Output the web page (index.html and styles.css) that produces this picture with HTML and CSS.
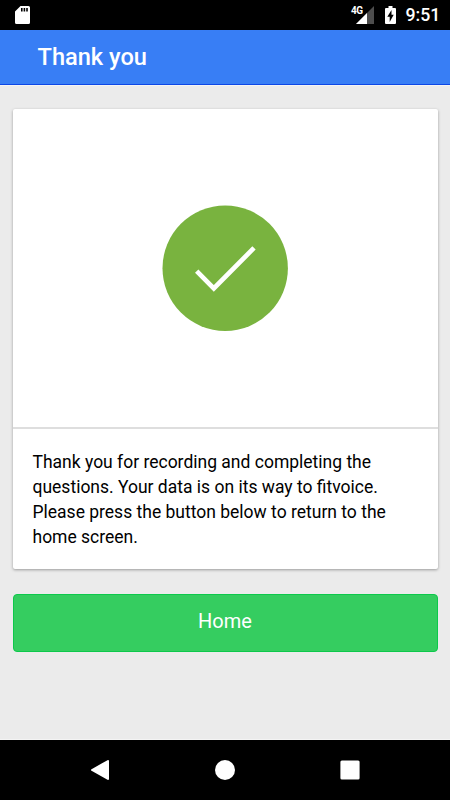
FILE: index.html
```html
<!DOCTYPE html>
<html lang="en">
<head>
<meta charset="utf-8">
<title>Thank you</title>
<link rel="stylesheet" href="styles.css">
</head>
<body>
<div class="screen">
  <div class="status">
    <svg class="sd" width="15" height="18" viewBox="0 0 15 18"><path fill="#fff" fill-rule="evenodd" d="M5.500 0H13.500Q15 0 15 1.500V16.500Q15 18 13.500 18H1.500Q0 18 0 16.500V5.500ZM6 2V5.500H7.600V2ZM8.600 2V5.500H10.200V2ZM11.200 2V5.500H12.800V2Z"/></svg>
    <div class="status-right">
      <span class="net">4G</span>
      <svg class="signal" width="18" height="18" viewBox="0 0 18 18"><path fill="#4d4d4d" d="M18 0V18H0Z"/><path fill="#fff" d="M11 7V18H0Z"/></svg>
      <svg class="battery" width="11" height="18" viewBox="0 0 11 18"><path fill="#fff" fill-rule="evenodd" d="M3.500 0H7.500V2H10Q11 2 11 3V17Q11 18 10 18H1Q0 18 0 17V3Q0 2 1 2H3.500ZM6.500 4L2.300 10.800H4.700V16L8.700 8.800H6.500Z"/></svg>
      <span class="clock">9:51</span>
    </div>
  </div>
  <header class="toolbar"><h1>Thank you</h1></header>
  <main class="content">
    <section class="card">
      <div class="card-image">
        <svg width="126" height="126" viewBox="0 0 126 126"><circle cx="63.200" cy="63.200" r="62.700" fill="#79b33f"/><path d="M34.700 66.200L51.800 83.400L92 42.900" fill="none" stroke="#fff" stroke-width="4.700"/></svg>
      </div>
      <p class="message">Thank you for recording and completing the<br>questions. Your data is on its way to fitvoice.<br>Please press the button below to return to the<br>home screen.</p>
    </section>
    <button class="home">Home</button>
  </main>
  <nav class="navbar">
    <svg width="20" height="20" viewBox="0 0 20 20"><path fill="#fff" stroke="#fff" stroke-width="2" stroke-linejoin="round" d="M2 10L18 1V19Z"/></svg>
    <svg width="20" height="20" viewBox="0 0 20 20"><circle cx="10" cy="10" r="10" fill="#fff"/></svg>
    <svg width="20" height="20" viewBox="0 0 20 20"><rect x=".4" y=".4" width="19.200" height="19.200" rx="1.500" fill="#fff"/></svg>
  </nav>
</div>
</body>
</html>
```
FILE: styles.css
```css
* { box-sizing: border-box; }
body { margin: 0; font-family: Roboto, sans-serif; }
.screen { width: 450px; height: 800px; display: flex; flex-direction: column; background: #ebebeb; overflow: hidden; }
.status { height: 30px; background: #000; color: #fff; display: flex; justify-content: space-between; padding: 0 10px 0 15px; align-items: center; }
.status-right { display: flex; align-items: center; }
.net { font-size: 10px; font-weight: 700; line-height: 10px; letter-spacing: -.5px; margin: -8px -7px 0 0; }
.battery { margin: 0 10px 0 11px; }
.clock { width: 34.500px; font-size: 17.7px; font-weight: 500; line-height: 30px; }
.toolbar { height: 55px; background: #387ef5; border-bottom: 1px solid #0c47e6; padding-left: 37.500px; color: #fff; }
.toolbar h1 { margin: 0; font-size: 23.6px; font-weight: 500; line-height: 54px; }
.content { flex: 1; padding: 22.500px 12.500px 0; border-top: 1px solid #f4f4f4; border-bottom: 1px solid #f4f4f4; }
.card { height: 460px; background: #fff; border-radius: 2px; box-shadow: 0 1px 3px rgba(0,0,0,.35); }
.card-image { height: 320px; border-bottom: 2px solid #dedede; display: flex; align-items: center; justify-content: center; }
.message { margin: 0; padding: 21px 20px 19px; font-size: 17.5px; line-height: 25px; color: #000; white-space: nowrap; }
.home { display: block; width: 100%; height: 58px; margin-top: 25px; padding: 0 0 4px; border: 1px solid #0cc94b; border-radius: 4px; background: #35cd60; color: #fff; font: 400 20px Roboto, sans-serif; }
.navbar { height: 60px; background: #000; display: flex; align-items: center; justify-content: center; gap: 105px; }
```
